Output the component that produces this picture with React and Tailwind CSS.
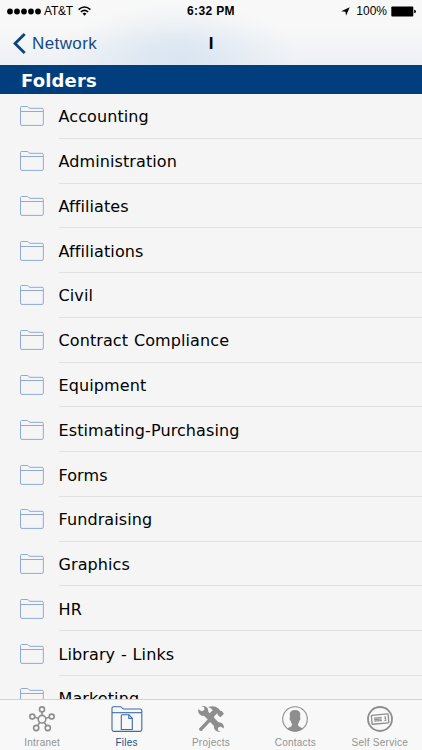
import React from "react";

const folders = [
  "Accounting",
  "Administration",
  "Affiliates",
  "Affiliations",
  "Civil",
  "Contract Compliance",
  "Equipment",
  "Estimating-Purchasing",
  "Forms",
  "Fundraising",
  "Graphics",
  "HR",
  "Library - Links",
  "Marketing",
];

const FolderIcon = () => (
  <svg width="24" height="20" viewBox="0 0 24 20" fill="none" stroke="#8fa9dc" strokeWidth="1">
    <path d="M.5 18V1.5Q.5.5 1.5.5H7.5Q8.3.5 8.7 1.5Q9 2.3 10 2.3H22Q23.3 2.3 23.3 3.5V18Q23.3 19.4 22 19.4H2Q.5 19.4.5 18Z" />
    <path d="M.5 5.5H23.3" />
  </svg>
);

const IntranetIcon = () => (
  <svg width="26" height="26" viewBox="0 0 26 26" fill="none" stroke="#8e8e8e" strokeWidth="1.6">
    <circle cx="13" cy="13.2" r="3.8" />
    <circle cx="13" cy="3.4" r="2.5" />
    <circle cx="3.3" cy="10.6" r="2.5" />
    <circle cx="22.7" cy="10.6" r="2.5" />
    <circle cx="7.2" cy="22" r="2.6" />
    <circle cx="18.8" cy="22" r="2.6" />
    <path d="M13 5.8V9.5M5.6 11.2L9.4 12.2M20.4 11.2L16.6 12.2M8.6 19.9L10.8 16.4M17.4 19.9L15.2 16.4" />
  </svg>
);

const FilesIcon = () => (
  <svg width="32" height="26" viewBox="0 0 32 26" fill="none" stroke="#3c6aa5" strokeWidth="1.1">
    <path d="M1 23.5V2Q1 .7 2.3.7H9.5Q10.6.7 11.1 1.9Q11.5 3 12.8 3H29Q30.8 3 30.8 4.6V23.5Q30.8 25.4 29 25.4H2.8Q1 25.4 1 23.5Z" />
    <path d="M1 6.7H30.8" />
    <path d="M11.3 8.8H18L21.3 12.3V23.5H10.3V9.8Q10.3 8.8 11.3 8.8Z" />
    <path d="M17.8 9V12.5H21.3" />
  </svg>
);

const ProjectsIcon = () => (
  <svg width="26" height="26" viewBox="0 0 26 26" fill="#8e8e8e">
    {/* wrench */}
    <path d="M.2 3.3L3.8 5.3L6.3 3.9L6.2 1.2L3.1.1Q6.2-.4 8.5 1.1Q10.8 3 10.2 5.8L20.4 16.2Q22.9 15.9 24.6 17.7Q26.3 19.7 25.8 22.5L22.5 20.6L20 21.8L20.1 24.4L22.8 25.9Q19.3 26.3 17.3 24.3Q15.5 22.4 16 19.9L6 9.8Q3.5 10.3 1.6 8.3Q-.3 6 .2 3.3Z" />
    {/* hammer */}
    <path d="M.9 22.7L13.1 10.1L11.2 7.7L14.7 4.3Q13.9 2.2 10.1 1Q16.5-1 20.8 2.8L22.5 5L23.8 4.9L26 7.7L22.4 11.2L19.7 8.9L19.8 7.6L18.4 7.9L16.2 10.2L16.4 11.2L3.6 25Q1.1 25.4.9 22.7Z" />
  </svg>
);

const ContactsIcon = () => (
  <svg width="26" height="26" viewBox="0 0 26 26" fill="none">
    <circle cx="13" cy="13" r="12.3" stroke="#8e8e8e" strokeWidth="1.1" />
    <path
      fill="#8e8e8e"
      d="M13 3.9Q17.7 3.8 18.3 7.8L18 11.4Q18.7 11.4 18.4 13Q18.1 14.7 17.4 14.8Q17 16.8 16.1 17.8V19.6Q16.5 20.8 20.8 22.4Q17.4 25.4 13 25.4Q8.6 25.4 5.2 22.4Q9.5 20.8 9.9 19.6V17.8Q9 16.8 8.6 14.8Q7.9 14.7 7.6 13Q7.3 11.4 8 11.4L7.7 7.8Q8.3 3.9 13 3.9Z"
    />
  </svg>
);

const SelfServiceIcon = () => (
  <svg width="26" height="26" viewBox="0 0 26 26" fill="none" stroke="#8e8e8e">
    <circle cx="13" cy="13" r="12" strokeWidth="1.8" />
    <g transform="rotate(-5 13 13)">
      <rect x="4.7" y="8.6" width="16.8" height="9" rx=".7" strokeWidth="1.3" />
      <path d="M7.2 11.6H14.8M7.2 13.1H14.8M7.2 14.6H14.8" strokeWidth="1.1" />
      <path d="M17.3 11.4H18.6V13H17.6M18.6 13V15H17.3" strokeWidth="1" />
    </g>
  </svg>
);

const tabs = [
  { label: "Intranet", icon: IntranetIcon },
  { label: "Files", icon: FilesIcon, active: true },
  { label: "Projects", icon: ProjectsIcon },
  { label: "Contacts", icon: ContactsIcon },
  { label: "Self Service", icon: SelfServiceIcon },
];

const StatusBar = () => (
  <div className="grid h-[21px] grid-cols-3 items-center text-[12px] leading-[21px] text-black">
    <div className="flex items-center pl-[7px]">
      <svg width="35" height="7" viewBox="0 0 35 7">
        {[3, 10, 17, 24, 31].map((x) => (
          <circle key={x} cx={x} cy="3.5" r="2.9" />
        ))}
      </svg>
      <span className="ml-[2px] pt-px tracking-[-0.2px]">AT&amp;T</span>
      <svg className="ml-[5.5px]" width="13" height="10" viewBox="0 0 13 10" fill="none" stroke="#000" strokeWidth="1.5">
        <path d="M.6 3.6Q6.5-1.7 12.4 3.6M2.8 6Q6.5 2.7 10.2 6" />
        <path d="M4.5 7.6Q6.5 6 8.5 7.6L6.5 9.7Z" fill="#000" stroke="none" />
      </svg>
    </div>
    <div className="pt-px text-center font-bold tracking-[0.35px]">6:32 PM</div>
    <div className="flex items-center justify-end pr-[6px]">
      <svg width="9" height="9" viewBox="0 0 9 9">
        <path d="M8.7.2L5 8.7L4.5 4.7L.2 4.3Z" />
      </svg>
      <span className="ml-[6px] pt-px">100%</span>
      <svg className="ml-[4px]" width="25" height="11" viewBox="0 0 25 11">
        <rect x=".3" y=".5" width="22" height="10" rx="1" />
        <path d="M23.2 3.7Q25 4 25 5.5T23.2 7.3Z" />
      </svg>
    </div>
  </div>
);

const App = () => {
  return (
    <div className="flex h-[750px] w-[422px] flex-col overflow-hidden bg-[#f5f5f5] font-['Liberation_Sans',Arial,sans-serif]">
      {/* Status bar and navigation */}
      <header className="h-[65px] shrink-0 bg-[#f7f7f8] bg-[radial-gradient(ellipse_120px_55px_at_178px_58px,#d9e5f1_0%,#d9e5f1b0_35%,#d9e5f140_70%,#d9e5f100_100%),linear-gradient(to_bottom,#f8f8f8_40%,#edf0f5_100%)]">
        <StatusBar />
        <div className="grid h-[44px] grid-cols-3 items-center">
          <button className="flex items-center pl-[13px] text-[17px] text-[#174a86]">
            <svg width="13" height="21" viewBox="0 0 13 21" fill="none" stroke="#0b427f" strokeWidth="2.8">
              <path d="M11.7 1L2 10.5L11.7 20" />
            </svg>
            <span className="ml-[6px] pt-px tracking-[0.4px]">Network</span>
          </button>
          <h1 className="pt-px text-center text-[17px] font-bold text-black">I</h1>
        </div>
      </header>

      {/* Folder list */}
      <h2 className="flex h-[29px] shrink-0 items-center bg-[#003e7e] pl-[21px] pt-px font-['DejaVu_Sans',sans-serif] text-[18px] font-bold tracking-[0.15px] text-white">
        Folders
      </h2>
      <ul className="min-h-0 flex-1 overflow-hidden font-['DejaVu_Sans',sans-serif] text-[16px] tracking-[0.1px] text-black [font-variant-ligatures:none] [word-spacing:0.6px]">
        {folders.map((name) => (
          <li key={name} className="flex h-[44.77px] items-center pl-[20px]">
            <FolderIcon />
            <div className="ml-[14.5px] flex h-full flex-1 items-center border-b border-[#e0e2e4] pt-[3px]">{name}</div>
          </li>
        ))}
      </ul>

      {/* Tab bar */}
      <nav className="grid h-[51px] shrink-0 grid-cols-5 border-t border-[#d2d3d5] bg-[#f8f8f8]">
        {tabs.map(({ label, icon: Icon, active }) => (
          <button
            key={label}
            className={`flex flex-col items-center pt-[6px] text-[10px] tracking-[0.25px] ${active ? "text-[#174f91]" : "text-[#929292]"}`}
          >
            <Icon />
            <span className="mt-[4px] whitespace-nowrap leading-[13px]">{label}</span>
          </button>
        ))}
      </nav>
    </div>
  );
};

export default App;
